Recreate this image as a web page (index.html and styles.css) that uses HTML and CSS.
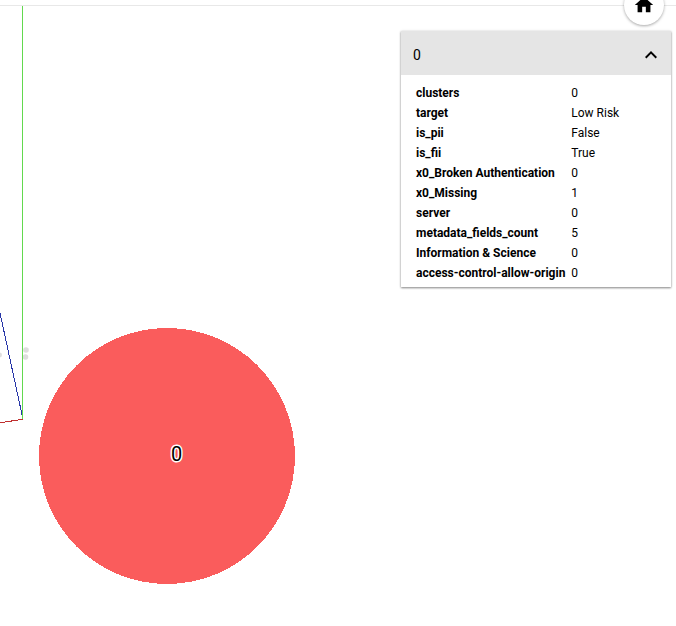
FILE: index.html
```html
<!DOCTYPE html>
<html lang="en">
<head>
<meta charset="utf-8">
<title>Projector</title>
<link rel="stylesheet" href="styles.css">
</head>
<body>
<main class="stage">
  <svg class="scene" width="676" height="626" viewBox="0 0 676 626" shape-rendering="crispEdges">
    <g fill="#dedede" shape-rendering="auto">
      <circle cx="26" cy="350" r="2.8"/>
      <circle cx="25.5" cy="357" r="2.8"/>
      <circle cx="-0.5" cy="355" r="2.5"/>
    </g>
    <path d="M0 422.8 L22.5 419.3" stroke="#c03030"/>
    <path d="M0 313 L22.5 417" stroke="#2836a8"/>
    <path d="M22.5 6V419" stroke="#62d94e"/>
    <circle cx="167" cy="456" r="128" fill="#fa5c5c"/>
  </svg>
  <span class="point-label">0</span>
  <button class="home" aria-label="Home">
    <svg width="22" height="22" viewBox="0 0 24 24"><path d="M10 20v-6h4v6h5v-8h3L12 3 2 12h3v8z"/></svg>
  </button>
  <section class="card">
    <header class="card-header">
      <span>0</span>
      <svg width="24" height="24" viewBox="0 0 24 24"><path d="M12 8l-6 6 1.41 1.41L12 10.83l4.59 4.58L18 14z"/></svg>
    </header>
    <dl class="metadata">
      <dt>clusters</dt><dd>0</dd>
      <dt>target</dt><dd>Low Risk</dd>
      <dt>is_pii</dt><dd>False</dd>
      <dt>is_fii</dt><dd>True</dd>
      <dt>x0_Broken Authentication</dt><dd>0</dd>
      <dt>x0_Missing</dt><dd>1</dd>
      <dt>server</dt><dd>0</dd>
      <dt>metadata_fields_count</dt><dd>5</dd>
      <dt>Information &amp; Science</dt><dd>0</dd>
      <dt>access-control-allow-origin</dt><dd>0</dd>
    </dl>
  </section>
</main>
</body>
</html>
```
FILE: styles.css
```css
* {
  box-sizing: border-box;
}

body {
  margin: 0;
  background: #fff;
  color: #000;
  font-family: Roboto, sans-serif;
}

.stage {
  position: relative;
  height: 626px;
  padding: 31px 5px 0 0;
  overflow: hidden;
  background: linear-gradient(#e8e8e8, #e8e8e8) 0 5px / 100% 1px no-repeat;
}

.scene {
  position: absolute;
  top: 0;
  left: 0;
}

.point-label {
  position: absolute;
  top: 442px;
  left: 171px;
  font-size: 20px;
  line-height: 24px;
  -webkit-text-stroke: 3px #fff;
  paint-order: stroke fill;
}

.home {
  position: absolute;
  top: -15px;
  left: 624px;
  display: flex;
  align-items: center;
  justify-content: center;
  width: 40px;
  height: 40px;
  padding: 0;
  border: 0;
  border-radius: 50%;
  background: #fff;
  box-shadow: 0 1px 3px rgba(0, 0, 0, 0.35);
}

.card {
  position: relative;
  width: 270px;
  margin-left: auto;
  background: #fff;
  box-shadow: 0 1px 2px rgba(0, 0, 0, 0.45), 0 0 3px rgba(0, 0, 0, 0.1);
}

.card-header {
  display: flex;
  align-items: center;
  justify-content: space-between;
  height: 44px;
  padding: 0 8px 0 12px;
  background: #e5e5e5;
  font-size: 14px;
  line-height: 20px;
}

.card-header span {
  padding-top: 4px;
}

.card-header svg {
  margin-top: 4px;
}

.metadata {
  display: grid;
  grid-template-columns: 155.3px 1fr;
  margin: 0;
  padding: 8px 15px 4px;
  font-size: 12px;
  line-height: 20px;
  white-space: nowrap;
}

.metadata dt {
  font-weight: 700;
}

.metadata dd {
  margin: 0;
}
```
